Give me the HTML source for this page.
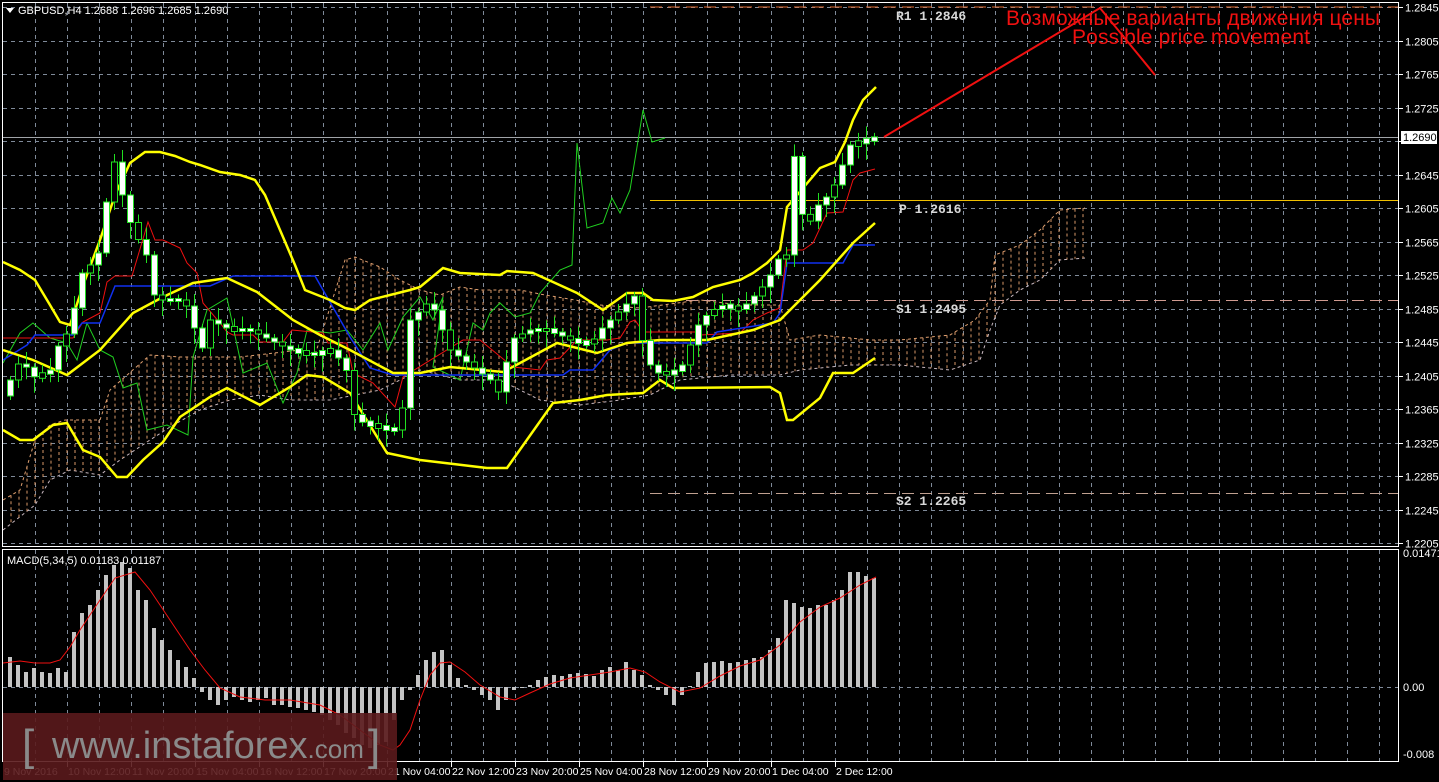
<!DOCTYPE html>
<html><head><meta charset="utf-8">
<style>
html,body{margin:0;padding:0;background:#000;width:1439px;height:782px;overflow:hidden}
svg{display:block}
text{font-family:"Liberation Sans",sans-serif}
text.mono{font-family:"Liberation Mono",monospace;font-weight:bold;font-size:13px}
</style></head>
<body>
<svg id="s" width="1439" height="782" viewBox="0 0 1439 782" xmlns="http://www.w3.org/2000/svg">
<rect width="1439" height="782" fill="#000"/>
<g id="grid" stroke="#7f8a99" stroke-width="1" stroke-dasharray="4,4"></g>
<g id="cloud"></g>
<line x1="650" y1="7" x2="1399" y2="7" stroke="#e06a30" stroke-dasharray="12,6"/>
<line x1="650" y1="200.5" x2="1399" y2="200.5" stroke="#f0c000" stroke-width="1"/>
<line x1="650" y1="300.5" x2="1399" y2="300.5" stroke="#d09a90" stroke-dasharray="12,6"/>
<line x1="650" y1="493.5" x2="1399" y2="493.5" stroke="#c0a090" stroke-dasharray="12,6"/>
<line x1="3" y1="137.5" x2="1399" y2="137.5" stroke="#a0a4a8"/>
<g fill="#d8d8d8">
<text class="mono" x="896" y="20">R1 1.2846</text>
<text class="mono" x="899" y="213">P 1.2616</text>
<text class="mono" x="896" y="313">S1 1.2495</text>
<text class="mono" x="896" y="505">S2 1.2265</text>
</g>
<g id="lines" fill="none"></g>
<g id="candles"></g>
<g id="macd"></g>
<polyline points="884,137 1100,8 1155,75" fill="none" stroke="#f01010" stroke-width="2"/>
<text x="1006" y="25" font-size="21" fill="#f01010" textLength="374">Возможные варианты движения цены</text>
<text x="1072" y="44" font-size="21" fill="#f01010" textLength="238">Possible price movement</text>
<rect x="2.5" y="2.5" width="1396" height="544" fill="none" stroke="#fff"/>
<rect x="2.5" y="549.5" width="1396" height="212" fill="none" stroke="#fff"/>
<polygon points="6,8 14,8 10,13" fill="#fff"/>
<text x="18" y="14" font-size="11" fill="#fff">GBPUSD,H4  1.2688 1.2696 1.2685 1.2690</text>
<text x="7" y="564" font-size="11" fill="#fff">MACD(5,34,5) 0.01183 0.01187</text>
<g id="axis" font-size="11" fill="#fff"></g>
<rect x="1401" y="131" width="36" height="13" fill="#fff"/>
<text x="1403" y="141" font-size="11" fill="#000">1.2690</text>
<rect x="3" y="713" width="394" height="67" fill="#5a1a1c" opacity="0.9"/>
<text x="22" y="760" font-size="44" fill="#8a8a8a">[</text>
<text x="52" y="758" font-size="38" fill="#8a8a8a">www.instaforex<tspan font-size="26">.com</tspan></text>
<text x="368" y="760" font-size="44" fill="#8a8a8a">]</text>
</svg>
<script>
const NS="http://www.w3.org/2000/svg";
function el(p,t,a){const e=document.createElementNS(NS,t);for(const k in a)e.setAttribute(k,a[k]);p.appendChild(e);return e;}
const g=document.getElementById('grid');
for(let x=35;x<1399;x+=32){el(g,'line',{x1:x+.5,y1:3,x2:x+.5,y2:546});el(g,'line',{x1:x+.5,y1:550,x2:x+.5,y2:761});}
const prices=["1.2845","1.2805","1.2765","1.2725","1.2685","1.2645","1.2605","1.2565","1.2525","1.2485","1.2445","1.2405","1.2365","1.2325","1.2285","1.2245","1.2205"];
const ax=document.getElementById('axis');
prices.forEach((p,i)=>{const y=Math.round(7+i*33.5)+.5;el(g,'line',{x1:3,y1:y,x2:1399,y2:y});el(ax,'line',{x1:1399,y1:y,x2:1403,y2:y,stroke:'#fff'});if(p!=="1.2685"){const t=el(ax,'text',{x:1405,y:y+4});t.textContent=p;}});
el(g,'line',{x1:3,y1:687.5,x2:1399,y2:687.5});
[["0.01471",557],["0.00",691],["-0.008",758]].forEach(a=>{const t=el(ax,'text',{x:1403,y:a[1]});t.textContent=a[0];});
const times=[["9 Nov 2016",3],["10 Nov 12:00",67],["11 Nov 20:00",131],["15 Nov 04:00",195],["16 Nov 12:00",259],["17 Nov 20:00",323],["21 Nov 04:00",387],["22 Nov 12:00",451],["23 Nov 20:00",515],["25 Nov 04:00",579],["28 Nov 12:00",643],["29 Nov 20:00",707],["1 Dec 04:00",771],["2 Dec 12:00",835]];
times.forEach(a=>{const t=el(ax,'text',{x:a[1]+1,y:775,'font-size':'10.5'});t.textContent=a[0];if(a[1]>3)el(ax,'line',{x1:a[1]+.5,y1:762,x2:a[1]+.5,y2:767,stroke:'#fff'});});
const cu=[[3,500],[20,490],[35,440],[50,425],[65,420],[100,420],[110,390],[150,355],[180,357],[240,357],[300,350],[315,355],[345,260],[355,257],[380,267],[400,280],[420,290],[440,295],[460,287],[480,290],[520,290],[545,295],[575,300],[600,305],[640,308],[700,300],[740,305],[780,305],[790,340],[820,335],[870,340],[900,340],[950,335],[975,320],[990,300],[995,255],[1020,245],[1040,230],[1060,210],[1085,208]];
const cl=[[3,530],[35,505],[50,480],[70,470],[100,475],[120,460],[150,440],[170,427],[200,410],[230,400],[260,395],[290,400],[330,400],[380,390],[420,370],[460,380],[500,380],[540,400],[580,405],[620,400],[650,395],[680,380],[730,375],[780,375],[800,370],[850,365],[900,365],[950,370],[980,360],[990,330],[1000,305],[1020,290],[1040,280],[1060,260],[1085,258]];
function interp(pts,x){for(let i=1;i<pts.length;i++){if(x<=pts[i][0]){const a=pts[i-1],b=pts[i];return a[1]+(b[1]-a[1])*(x-a[0])/(b[0]-a[0]);}}return pts[pts.length-1][1];}
const cg=document.getElementById('cloud');
el(cg,'polyline',{points:cu.map(p=>p.join(',')).join(' '),fill:'none',stroke:'#e0a070','stroke-dasharray':'3,3'});
el(cg,'polyline',{points:cl.map(p=>p.join(',')).join(' '),fill:'none',stroke:'#c8b8c0','stroke-dasharray':'3,3'});
for(let x=11;x<1085;x+=8){el(cg,'line',{x1:x,y1:interp(cu,x),x2:x,y2:interp(cl,x),stroke:'#d89868','stroke-dasharray':'3,3'});}
const L=document.getElementById('lines');
function pl(pts,c,w){el(L,'polyline',{points:pts.map(p=>p.join(',')).join(' '),stroke:c,'stroke-width':w,fill:'none'});}
pl([[3,363],[20,333],[33,323],[50,338],[67,343],[77,360],[87,323],[100,350],[113,357],[123,388],[137,383],[147,430],[167,425],[188,435],[193,357],[207,310],[227,298],[243,373],[267,363],[283,403],[297,373],[307,330],[330,333],[347,330],[363,350],[380,323],[388,350],[403,317],[420,297],[433,320],[443,297],[433,367],[460,380],[473,323],[483,330],[490,313],[500,303],[515,317],[530,313],[540,293],[560,270],[572,265],[577,143],[587,228],[603,223],[612,198],[620,213],[630,190],[643,110],[652,142],[665,138]],'#20d020',1);
pl([[3,338],[73,338],[83,322],[100,313],[107,282],[115,276],[132,276],[148,222],[155,240],[163,240],[180,248],[187,263],[197,273],[203,303],[220,323],[227,332],[233,335],[253,335],[260,342],[283,342],[292,330],[323,333],[328,343],[347,343],[353,373],[373,383],[395,407],[403,377],[463,340],[480,340],[513,367],[540,370],[547,360],[560,358],[577,340],[607,340],[620,338],[630,322],[635,320],[643,332],[697,332],[700,335],[740,333],[753,320],[767,313],[780,308],[787,250],[803,250],[813,243],[827,213],[843,212],[853,180],[860,173],[875,169]],'#f01010',1);
pl([[3,360],[27,345],[35,335],[73,335],[82,323],[100,323],[115,286],[210,286],[233,276],[315,276],[350,337],[370,368],[393,375],[563,375],[570,370],[593,370],[610,350],[627,343],[707,343],[717,332],[773,323],[780,313],[787,263],[843,263],[853,245],[875,245]],'#1030f0',1.5);
pl([[3,262],[20,270],[35,280],[50,305],[60,322],[70,325],[85,280],[100,240],[115,195],[130,163],[145,152],[160,152],[175,156],[190,162],[200,165],[220,172],[240,175],[255,180],[265,195],[280,230],[295,265],[305,290],[320,296],[330,300],[345,308],[355,310],[370,300],[390,295],[410,290],[420,287],[443,268],[460,273],[500,275],[507,271],[533,273],[553,282],[577,293],[603,310],[627,293],[643,293],[653,300],[673,301],[693,297],[713,287],[740,280],[753,273],[767,263],[780,250],[787,207],[820,168],[835,162],[845,142],[853,120],[863,100],[876,87]],'#ffff00',2.5);
pl([[3,350],[33,360],[67,375],[100,350],[133,313],[163,297],[193,283],[227,278],[257,292],[293,320],[320,335],[350,350],[393,373],[420,373],[450,367],[503,372],[520,363],[557,343],[577,348],[597,353],[627,343],[660,340],[707,340],[753,330],[780,320],[820,280],[853,243],[875,223]],'#ffff00',2.5);
pl([[3,430],[20,440],[33,440],[53,425],[67,423],[83,450],[100,457],[117,477],[127,477],[143,460],[163,442],[180,417],[210,397],[227,388],[260,405],[290,387],[307,375],[323,377],[350,393],[387,453],[420,460],[487,468],[507,468],[553,403],[580,400],[607,395],[643,393],[660,380],[673,388],[770,387],[780,393],[787,420],[793,420],[820,398],[833,373],[853,373],[875,358]],'#ffff00',2.5);
const path=[[10,380],[20,360],[35,378],[50,370],[60,340],[70,330],[80,275],[90,265],[100,250],[110,170],[115,160],[125,210],[135,235],[145,250],[155,300],[165,300],[180,300],[190,310],[200,355],[210,320],[230,330],[250,330],[270,340],[290,350],[310,355],[330,350],[345,365],[355,420],[370,425],[390,430],[400,430],[410,320],[430,300],[450,350],[470,365],[490,380],[500,395],[510,340],[530,330],[550,330],[570,340],[590,345],[600,330],[620,310],[635,295],[645,360],[660,375],[680,370],[700,320],[720,305],[740,310],[760,290],[770,275],[780,255],[788,255],[795,140],[803,225],[812,220],[820,200],[830,195],[840,170],[850,145],[865,140],[876,138]];
const C=document.getElementById('candles');
let prev=interp(path,2);
let i=0;
for(let x=10;x<=876;x+=8,i++){
 const c=interp(path,x);
 let top=Math.min(prev,c),bot=Math.max(prev,c);
 if(bot-top<3){top-=1.5;bot+=1.5;}
 const hi=top-4-(i%3)*4,lo=bot+4+(i%4)*4;
 el(C,'line',{x1:x+.5,y1:hi,x2:x+.5,y2:lo,stroke:'#20e020'});
 el(C,'rect',{x:x-2.5,y:top,width:6,height:bot-top,fill:(i%3==1?'#000':'#fff'),stroke:'#20e020','stroke-width':1});
 prev=c;
}
const mh=[657,665,672,668,672,673,668,672,632,613,605,590,575,565,562,568,590,600,628,640,650,660,667,678,692,700,705,700,697,700,702,700,698,705,705,707,708,710,712,715,720,725,733,738,745,748,745,742,720,700,690,675,660,652,650,665,678,685,690,695,700,710,700,690,688,685,680,677,675,676,674,673,674,676,670,667,670,662,670,675,685,690,695,705,695,686,672,663,662,661,663,662,660,658,657,650,638,600,603,607,608,605,605,600,590,572,572,576,578];
const M=document.getElementById('macd');
mh.forEach((v,k)=>{const x=8+k*8;el(M,'rect',{x:x,y:Math.min(v,687),width:4,height:Math.max(1,Math.abs(687-v)),fill:'#c4c4c4'});});
el(M,'polyline',{points:"3,663 20,661 35,663 50,663 60,660 70,647 80,630 100,600 115,578 135,572 150,590 170,620 190,650 205,670 220,688 240,697 265,700 290,700 320,705 340,715 360,730 380,745 393,750 400,745 410,730 420,700 430,675 440,663 450,662 465,672 480,685 500,697 515,700 530,693 550,684 570,678 590,675 610,672 630,668 645,672 660,682 680,692 700,688 720,676 740,666 760,660 780,645 800,622 820,607 840,598 860,585 876,577",fill:'none',stroke:'#f01010','stroke-width':1});
</script>
</body></html>
